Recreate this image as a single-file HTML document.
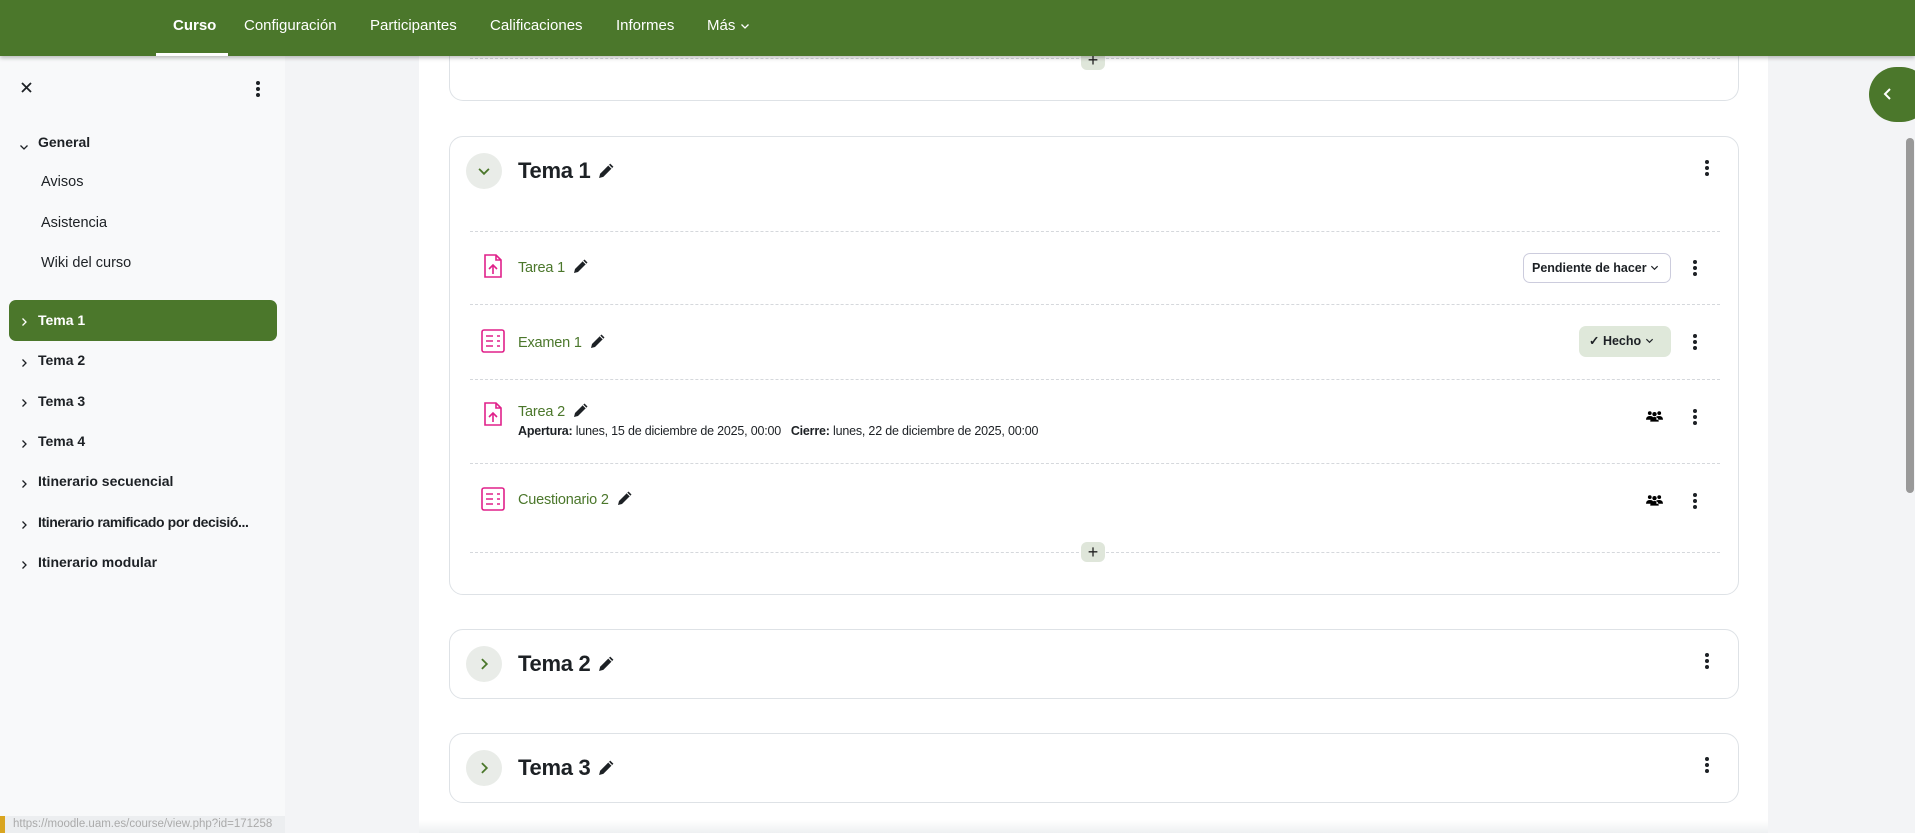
<!DOCTYPE html>
<html><head><meta charset="utf-8"><style>
*{box-sizing:border-box;margin:0;padding:0}
body{width:1915px;height:833px;overflow:hidden;font-family:"Liberation Sans",sans-serif;background:#f3f4f6;position:relative;color:#1d2125}
.nav{position:absolute;left:0;top:0;width:1915px;height:56px;background:#4b772b;box-shadow:0 2px 4px rgba(0,0,0,.25);z-index:5}
.nav span{position:absolute;top:17px;color:#fff;font-size:15px}
.nav .act{font-weight:bold}
.ul{position:absolute;left:156px;top:53px;width:72px;height:3px;background:#fff}
.side{position:absolute;left:0;top:56px;width:285px;height:777px;background:#f8f9fa}
.side .it{position:absolute;font-size:14.5px;color:#1d2125}
.side .b{font-weight:bold;font-size:14px}
.side .ch{position:absolute;left:19px}
.main{position:absolute;left:419px;top:56px;width:1349px;height:777px;background:#fff}
.card{position:absolute;left:449px;width:1290px;border:1px solid #dee2e6;border-radius:14px;background:#fff}
.circ{position:absolute;width:36px;height:36px;border-radius:50%;background:#e9ece8}
.circ svg{position:absolute;left:11px;top:11px}
.h{position:absolute;font-size:22px;font-weight:bold;letter-spacing:-0.3px}
.dash{position:absolute;left:470px;width:1250px;border-top:1.5px dashed #d5d8dc}
.keb{position:absolute;width:4px}
.keb i{display:block;width:4px;height:4px;border-radius:50%;background:#1d2125;margin-bottom:2px}
.an{position:absolute;left:518px;font-size:14.5px;color:#4b772b;letter-spacing:-0.2px}
.an svg{vertical-align:-2px;margin-left:8px}
.h svg{vertical-align:-1px;margin-left:2px}
.plus{position:absolute;width:24px;height:20px;border-radius:6px;background:#dfe6da;text-align:center;font-size:18px;line-height:20px;color:#222}
</style></head><body>
<svg width="0" height="0" style="position:absolute"><defs>
<symbol id="pen" viewBox="0 0 16 16"><path d="M11.5 1.5l3 3L5 14l-4 1 1-4z" fill="#1d2125"/><path d="M10 3l3 3" stroke="#fff" stroke-width="1"/></symbol>
<symbol id="rc" viewBox="0 0 10 10"><path d="M3.5 1.5l3.5 3.5-3.5 3.5" fill="none" stroke="currentColor" stroke-width="1.3"/></symbol>
<symbol id="dc" viewBox="0 0 10 10"><path d="M1.5 3.5l3.5 3.5 3.5-3.5" fill="none" stroke="currentColor" stroke-width="1.3"/></symbol>
<symbol id="grp" viewBox="0 0 18 12"><circle cx="4" cy="3" r="2"/><circle cx="14" cy="3" r="2"/><circle cx="9" cy="4" r="2.3"/><path d="M0 10q0-4 4-4t3 2v2zM18 10q0-4-4-4t-3 2v2zM4.5 12q0-5 4.5-5t4.5 5z"/></symbol>
</defs></svg>
<div class="nav">
<span class="act" style="left:173px">Curso</span>
<span style="left:244px">Configuración</span>
<span style="left:370px">Participantes</span>
<span style="left:490px">Calificaciones</span>
<span style="left:616px">Informes</span>
<span style="left:707px">Más <svg width="10" height="10" style="color:#fff;vertical-align:-1px"><use href="#dc"/></svg></span>
<div class="ul"></div>
</div>
<div class="side">
<svg style="position:absolute;left:21px;top:26px" width="11" height="11" viewBox="0 0 11 11"><path d="M1 1l9 9M10 1l-9 9" stroke="#1d2125" stroke-width="1.8"/></svg>
<div class="keb" style="left:256px;top:25px"><i></i><i></i><i></i></div>
<svg class="ch" style="top:86px" width="10" height="10"><use href="#dc"/></svg><div class="it b" style="left:38px;top:78px">General</div>
<div class="it" style="left:41px;top:118px">Avisos</div>
<div class="it" style="left:41px;top:159px">Asistencia</div>
<div class="it" style="left:41px;top:199px">Wiki del curso</div>
<div style="position:absolute;left:9px;top:244px;width:268px;height:41px;background:#4b772b;border-radius:7px"></div>
<svg class="ch" style="top:261px;color:#fff" width="10" height="10"><use href="#rc"/></svg><div class="it b" style="left:38px;top:256px;color:#fff">Tema 1</div>
<svg class="ch" style="top:302px" width="10" height="10"><use href="#rc"/></svg><div class="it b" style="left:38px;top:296px">Tema 2</div>
<svg class="ch" style="top:342px" width="10" height="10"><use href="#rc"/></svg><div class="it b" style="left:38px;top:337px">Tema 3</div>
<svg class="ch" style="top:383px" width="10" height="10"><use href="#rc"/></svg><div class="it b" style="left:38px;top:377px">Tema 4</div>
<svg class="ch" style="top:423px" width="10" height="10"><use href="#rc"/></svg><div class="it b" style="left:38px;top:417px">Itinerario secuencial</div>
<svg class="ch" style="top:464px" width="10" height="10"><use href="#rc"/></svg><div class="it b" style="left:38px;top:458px;letter-spacing:-0.4px">Itinerario ramificado por decisió...</div>
<svg class="ch" style="top:504px" width="10" height="10"><use href="#rc"/></svg><div class="it b" style="left:38px;top:498px">Itinerario modular</div>
<div style="position:absolute;left:0;top:760px;width:285px;height:17px;background:#eceef0;font-size:11.5px;color:#aaa;padding-left:8px;line-height:17px;border-left:5px solid #d9a520">https://moodle.uam.es/course/view.php?id=171258</div>
</div>
<div class="main"></div>
<div style="position:absolute;left:1869px;top:67px;width:60px;height:55px;border-radius:28px;background:#4b772b"></div>
<svg style="position:absolute;left:1882px;top:87px;color:#fff" width="12" height="14" viewBox="0 0 12 14"><path d="M8 2L3 7l5 5" fill="none" stroke="#fff" stroke-width="2"/></svg>
<div style="position:absolute;left:1906px;top:138px;width:8px;height:355px;border-radius:4px;background:#999"></div>

<div class="card" style="top:40px;height:61px;border-top:none"></div>
<div class="dash" style="top:58px"></div>
<div class="plus" style="left:1081px;top:50px">+</div>

<div class="card" style="top:136px;height:459px"></div>
<div class="circ" style="left:466px;top:153px;color:#4b772b"><svg width="14" height="14"><use href="#dc"/></svg></div>
<div class="h" style="left:518px;top:158px">Tema 1 <svg width="17" height="17"><use href="#pen"/></svg></div>
<div class="keb" style="left:1705px;top:160px"><i></i><i></i><i></i></div>
<div class="dash" style="top:231px"></div>
<svg style="position:absolute;left:483px;top:253px" width="20" height="26" viewBox="0 0 20 26" fill="none" stroke="#e0218a" stroke-width="1.6"><path d="M2 2h11l5 5v17H2z M13 2v5h5 M10 21V12 M6 16l4-4 4 4"/></svg>
<div class="an" style="top:258px">Tarea 1<svg width="16" height="16"><use href="#pen"/></svg></div>
<div style="position:absolute;left:1523px;top:253px;width:148px;height:30px;border:1px solid #ccd;border-radius:7px;font-size:12.5px;font-weight:bold;line-height:28px;padding-left:8px">Pendiente de hacer <svg width="9" height="9"><use href="#dc"/></svg></div>
<div class="keb" style="left:1693px;top:260px"><i></i><i></i><i></i></div>
<div class="dash" style="top:304px"></div>
<svg style="position:absolute;left:481px;top:329px" width="24" height="24" viewBox="0 0 24 24" fill="none" stroke="#e0218a" stroke-width="1.6"><rect x="1" y="1" width="22" height="22" rx="2"/><path d="M5 7h7M5 12h7M5 17h7M16 7h3M16 12h3M16 17h3"/></svg>
<div class="an" style="top:333px">Examen 1<svg width="16" height="16"><use href="#pen"/></svg></div>
<div style="position:absolute;left:1579px;top:326px;width:92px;height:31px;background:#dfe8da;border-radius:7px;font-size:12.5px;font-weight:bold;line-height:31px;padding-left:10px">✓ Hecho <svg width="9" height="9"><use href="#dc"/></svg></div>
<div class="keb" style="left:1693px;top:334px"><i></i><i></i><i></i></div>
<div class="dash" style="top:379px"></div>
<svg style="position:absolute;left:483px;top:401px" width="20" height="26" viewBox="0 0 20 26" fill="none" stroke="#e0218a" stroke-width="1.6"><path d="M2 2h11l5 5v17H2z M13 2v5h5 M10 21V12 M6 16l4-4 4 4"/></svg>
<div class="an" style="top:402px">Tarea 2<svg width="16" height="16"><use href="#pen"/></svg></div>
<div style="position:absolute;left:518px;top:424px;font-size:12.5px;letter-spacing:-0.2px"><b>Apertura:</b> lunes, 15 de diciembre de 2025, 00:00 &nbsp;&nbsp;<b>Cierre:</b> lunes, 22 de diciembre de 2025, 00:00</div>
<svg style="position:absolute;left:1646px;top:410px" width="17" height="12"><use href="#grp"/></svg>
<div class="keb" style="left:1693px;top:409px"><i></i><i></i><i></i></div>
<div class="dash" style="top:463px"></div>
<svg style="position:absolute;left:481px;top:487px" width="24" height="24" viewBox="0 0 24 24" fill="none" stroke="#e0218a" stroke-width="1.6"><rect x="1" y="1" width="22" height="22" rx="2"/><path d="M5 7h7M5 12h7M5 17h7M16 7h3M16 12h3M16 17h3"/></svg>
<div class="an" style="top:490px">Cuestionario 2<svg width="16" height="16"><use href="#pen"/></svg></div>
<svg style="position:absolute;left:1646px;top:494px" width="17" height="12"><use href="#grp"/></svg>
<div class="keb" style="left:1693px;top:493px"><i></i><i></i><i></i></div>
<div class="dash" style="top:552px"></div>
<div class="plus" style="left:1081px;top:542px">+</div>

<div class="card" style="top:629px;height:70px"></div>
<div class="circ" style="left:466px;top:646px;color:#4b772b"><svg width="14" height="14"><use href="#rc"/></svg></div>
<div class="h" style="left:518px;top:651px">Tema 2 <svg width="17" height="17"><use href="#pen"/></svg></div>
<div class="keb" style="left:1705px;top:653px"><i></i><i></i><i></i></div>

<div class="card" style="top:733px;height:70px"></div>
<div class="circ" style="left:466px;top:750px;color:#4b772b"><svg width="14" height="14"><use href="#rc"/></svg></div>
<div class="h" style="left:518px;top:755px">Tema 3 <svg width="17" height="17"><use href="#pen"/></svg></div>
<div class="keb" style="left:1705px;top:757px"><i></i><i></i><i></i></div>
<div style="position:absolute;left:419px;top:820px;width:1349px;height:13px;background:linear-gradient(#fff,#eef0f2)"></div>
</body></html>
